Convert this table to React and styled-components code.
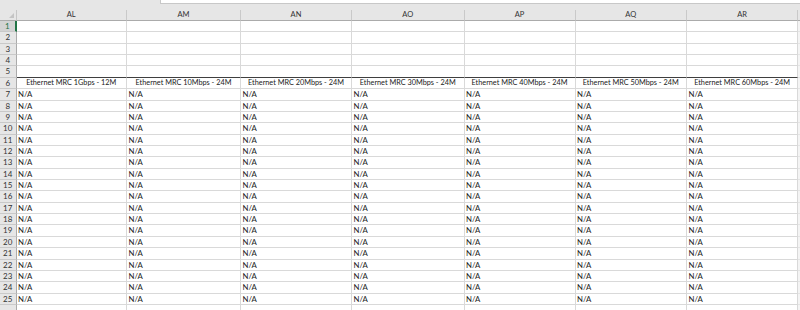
import React from "react";
import styled, { createGlobalStyle } from "styled-components";

const Global = createGlobalStyle`
  html, body { margin: 0; padding: 0; background: #ffffff; overflow: hidden; }
  body { font-family: Lato, "Open Sans", "Liberation Sans", sans-serif; }
`;

const COLS = ["AL", "AM", "AN", "AO", "AP", "AQ", "AR"];
const WIDTHS = [110.5, 114, 111, 112.5, 111, 111.5, 111.3];
const HEADERS = [
  "Ethernet MRC 1Gbps - 12M",
  "Ethernet MRC 10Mbps - 24M",
  "Ethernet MRC 20Mbps - 24M",
  "Ethernet MRC 30Mbps - 24M",
  "Ethernet MRC 40Mbps - 24M",
  "Ethernet MRC 50Mbps - 24M",
  "Ethernet MRC 60Mbps - 24M",
];
const TEMPLATE = `16.5px ${WIDTHS.map((w) => w + "px").join(" ")} 1fr`;

const Page = styled.div`
  width: 800px;
  height: 310px;
  overflow: hidden;
  display: flex;
  flex-direction: column;
  background: #ffffff;
`;

const TopBar = styled.div`
  height: 10px;
  flex: none;
  background: #e6e6e6;
  display: flex;
  padding-left: 160px;
`;

const FormulaBox = styled.div`
  flex: 1;
  height: 3px;
  background: #ffffff;
  border-bottom: 1px solid #c8c8c8;
  border-left: 1px solid #c8c8c8;
`;

const Row = styled.div`
  display: grid;
  grid-template-columns: ${TEMPLATE};
  height: ${(p) => (p.$head ? "11px" : "11.36px")};
  flex: none;
`;

const Corner = styled.div`
  background: #e6e6e6;
  border-bottom: 1px solid #ababab;
  border-right: 1px solid #c6c6c6;
  position: relative;
  &::after {
    content: "";
    position: absolute;
    right: 2px;
    bottom: 2px;
    width: 0;
    height: 0;
    border-left: 5px solid transparent;
    border-bottom: 5px solid #c4c4c4;
  }
`;

const ColHead = styled.div`
  background: #e6e6e6;
  border-bottom: 1px solid #ababab;
  border-right: 1px solid #c9c9c9;
  color: #333333;
  font-size: 7.5px;
  line-height: 10px;
  text-align: center;
`;

const Filler = styled.div`
  background: ${(p) => (p.$head ? "#e6e6e6" : "#f4f4f4")};
  border-bottom: 1px solid ${(p) => (p.$head ? "#ababab" : "#e4e4e4")};
`;

const RowHead = styled.div`
  background: ${(p) => (p.$active ? "#d3d3d3" : "#e6e6e6")};
  color: ${(p) => (p.$active ? "#217346" : "#333333")};
  border-bottom: 1px solid #c9c9c9;
  border-right: ${(p) => (p.$active ? "2px solid #217346" : "1px solid #ababab")};
  font-size: 8px;
  line-height: 10.36px;
  text-align: center;
  box-sizing: border-box;
`;

const Cell = styled.div`
  box-sizing: border-box;
  border-right: 1px solid #d9d9d9;
  border-bottom: ${(p) => (p.$thick ? "1px solid #3f3f3f" : "1px solid #d9d9d9")};
  color: #222222;
  font-size: ${(p) => (p.$center ? "7.3px" : "7.8px")};
  line-height: 10.36px;
  padding: 0 ${(p) => (p.$center ? "0" : "1.5px")};
  text-align: ${(p) => (p.$center ? "center" : "left")};
  white-space: nowrap;
  overflow: hidden;
`;

export default function App() {
  const rows = Array.from({ length: 25 }, (_, i) => i + 1);
  return (
    <Page>
      <Global />
      <TopBar>
        <FormulaBox />
      </TopBar>
      <Row $head>
        <Corner />
        {COLS.map((c) => (
          <ColHead key={c}>{c}</ColHead>
        ))}
        <Filler $head />
      </Row>
      {rows.map((r) => (
        <Row key={r}>
          <RowHead $active={r === 1}>{r}</RowHead>
          {COLS.map((c, ci) => (
            <Cell key={c} $thick={r === 5} $center={r === 6}>
              {r === 6 ? HEADERS[ci] : r >= 7 ? "N/A" : ""}
            </Cell>
          ))}
          <Filler />
        </Row>
      ))}
      <Row>
        <RowHead />
        {COLS.map((c) => (
          <Cell key={c} />
        ))}
        <Filler />
      </Row>
    </Page>
  );
}
